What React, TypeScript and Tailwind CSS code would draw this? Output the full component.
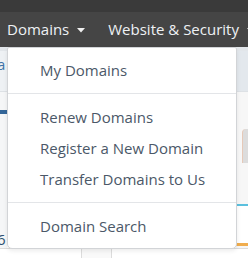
import React from "react";

const font = { fontFamily: '"Open Sans", "Liberation Sans", sans-serif' };

function Caret() {
  return (
    <svg width="8" height="5" viewBox="0 0 8 5" className="ml-[8px] mt-[1px] shrink-0">
      <path d="M0 0 L8 0 L4 4.5 Z" fill="#f0f0f0" />
    </svg>
  );
}

function Item({ label }: { label: string }) {
  return (
    <div className="h-[31px] pl-[32px] flex items-center text-[15px] text-[#4b5868] whitespace-nowrap">
      {label}
    </div>
  );
}

function Divider() {
  return <div className="mt-[7px] h-[1px] bg-[#e3e5e8] mb-[8px]" />;
}

export default function App() {
  return (
    <div className="relative w-[248px] h-[258px] overflow-hidden bg-white" style={font}>
      <div className="h-[12px] bg-[#3a3a3a]" />
      <div className="h-[35px] bg-[#454545] flex items-center pl-[7px] text-[15px] text-[#eef1f4] whitespace-nowrap">
        <span className="flex items-center shrink-0">
          Domains
          <Caret />
        </span>
        <span className="flex items-center ml-[23px] shrink-0">
          Website &amp; Security
          <Caret />
        </span>
      </div>
      {/* background page content */}
      <div className="flex flex-col">
        <div className="h-[4px] bg-[#e2e6ea]" />
        <div className="h-[41px] bg-[#eef1f4] border-b border-[#dde1e5] flex">
          <div className="w-[7px] overflow-hidden pt-[3px] text-[15px] text-[#3f74a8] leading-[20px]">
            <span className="-ml-[3px]">a</span>
          </div>
          <div className="flex-1" />
          <div className="w-[12px] bg-[#e3e8ed]" />
        </div>
        <div className="flex h-[156px]">
          <div className="w-[7px] bg-[#f5f6f7] flex flex-col">
            <div className="h-[18px]" />
            <div className="h-[4px] bg-[#336699]" />
            <div className="h-[118px]" />
            <div className="text-[15px] leading-[14px] text-[#2c4f70] -ml-[3px]">6</div>
          </div>
          <div className="flex-1" />
          <div className="w-[12px] flex flex-col bg-[#f7f7f7]">
            <div className="h-[37px]" />
            <div className="h-[34px] ml-[6px] rounded-tl-[4px] bg-[#dcdcdc] border-l border-[#e6c9b8]" />
            <div className="h-[41px]" />
            <div className="h-[2px] bg-[#5bc0de]" />
            <div className="h-[37px] bg-white" />
            <div className="h-[3px] bg-[#f0ad4e]" />
          </div>
        </div>
        <div className="h-[10px] border-t border-[#dcdcdc] flex">
          <div className="w-[81px]" />
          <div className="w-[31px] border-l border-r border-[#dcdcdc] bg-[#f9f9f9]" />
        </div>
      </div>
      {/* dropdown */}
      <div className="absolute left-[7px] top-[47px] w-[230px] h-[202px] bg-white border border-[#d2d4d7] rounded-b-[5px] rounded-t-[2px] shadow-[0_2px_4px_rgba(0,0,0,0.08)] pt-[7px]">
        <Item label="My Domains" />
        <Divider />
        <Item label="Renew Domains" />
        <Item label="Register a New Domain" />
        <Item label="Transfer Domains to Us" />
        <Divider />
        <Item label="Domain Search" />
      </div>
    </div>
  );
}
